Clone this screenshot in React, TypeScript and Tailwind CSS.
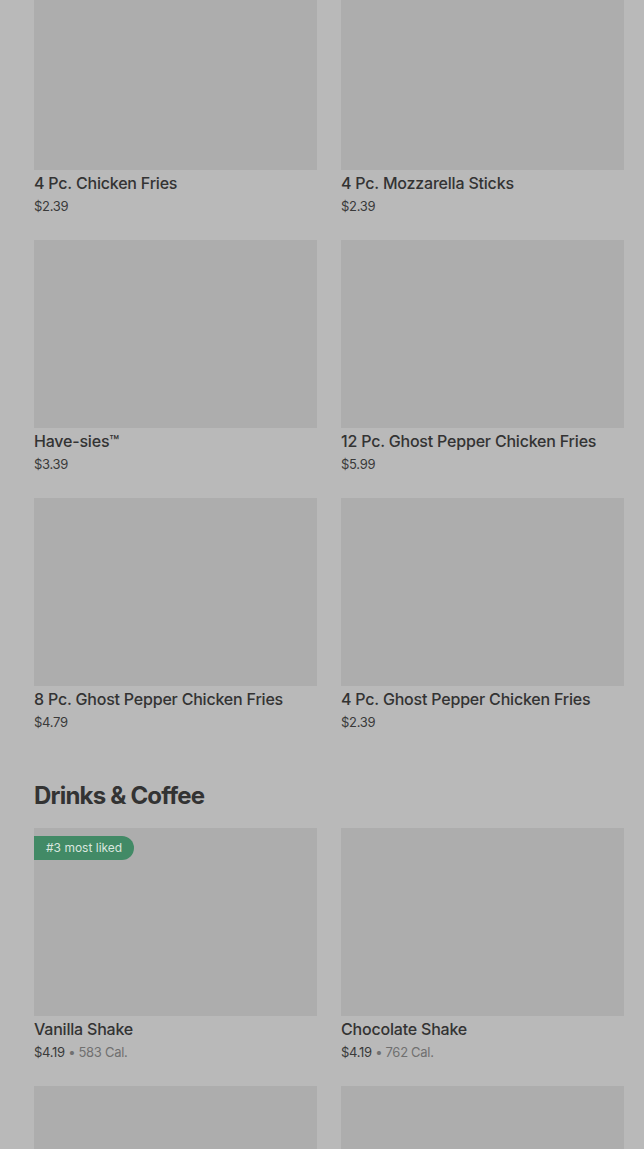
type Item = { name?: string; price?: string; cal?: string; badge?: string };

const sides: Item[] = [
  { name: "4 Pc. Chicken Fries", price: "$2.39" },
  { name: "4 Pc. Mozzarella Sticks", price: "$2.39" },
  { name: "Have-sies™", price: "$3.39" },
  { name: "12 Pc. Ghost Pepper Chicken Fries", price: "$5.99" },
  { name: "8 Pc. Ghost Pepper Chicken Fries", price: "$4.79" },
  { name: "4 Pc. Ghost Pepper Chicken Fries", price: "$2.39" },
];

// last row is scrolled past the fold, only the images show
const drinks: Item[] = [
  { name: "Vanilla Shake", price: "$4.19", cal: "583 Cal.", badge: "#3 most liked" },
  { name: "Chocolate Shake", price: "$4.19", cal: "762 Cal." },
  {},
  {},
];

function Card({ item }: { item: Item }) {
  return (
    <div className="flex flex-col h-[234px]">
      <div className="relative h-[188px] shrink-0 bg-[#adadad]">
        {item.badge && (
          <span className="absolute left-0 top-2 h-6 px-3 flex items-center rounded-r-full bg-[#428a66] text-[12px] text-[#d9e6df]">
            {item.badge}
          </span>
        )}
      </div>
      {item.name && (
        <div className="pt-[3px]">
          <p className="text-[16px] leading-5 font-medium tracking-[-0.2px] text-[#333333] truncate">{item.name}</p>
          <p className="mt-[3px] text-[13px] leading-5 tracking-[-0.3px] text-[#3a3a3a]">
            {item.price}
            {item.cal && (
              <span className="text-[#707070]">
                {" "}
                • {item.cal}
              </span>
            )}
          </p>
        </div>
      )}
    </div>
  );
}

export default function App() {
  return (
    <div className="h-screen bg-[#b9b9b9] overflow-hidden" style={{ fontFamily: "Inter, 'Noto Sans', sans-serif" }}>
      <div className="pl-[34px] pr-[20px] -mt-[18px]">
        <div className="grid grid-cols-2 gap-x-6 gap-y-6">
          {sides.map((item, i) => (
            <Card key={i} item={item} />
          ))}
        </div>

        <h2 className="mt-12 mb-4 text-[24px] leading-8 font-bold tracking-[-0.8px] text-[#333333]">
          Drinks &amp; Coffee
        </h2>

        <div className="grid grid-cols-2 gap-x-6 gap-y-6">
          {drinks.map((item, i) => (
            <Card key={i} item={item} />
          ))}
        </div>
      </div>
    </div>
  );
}
